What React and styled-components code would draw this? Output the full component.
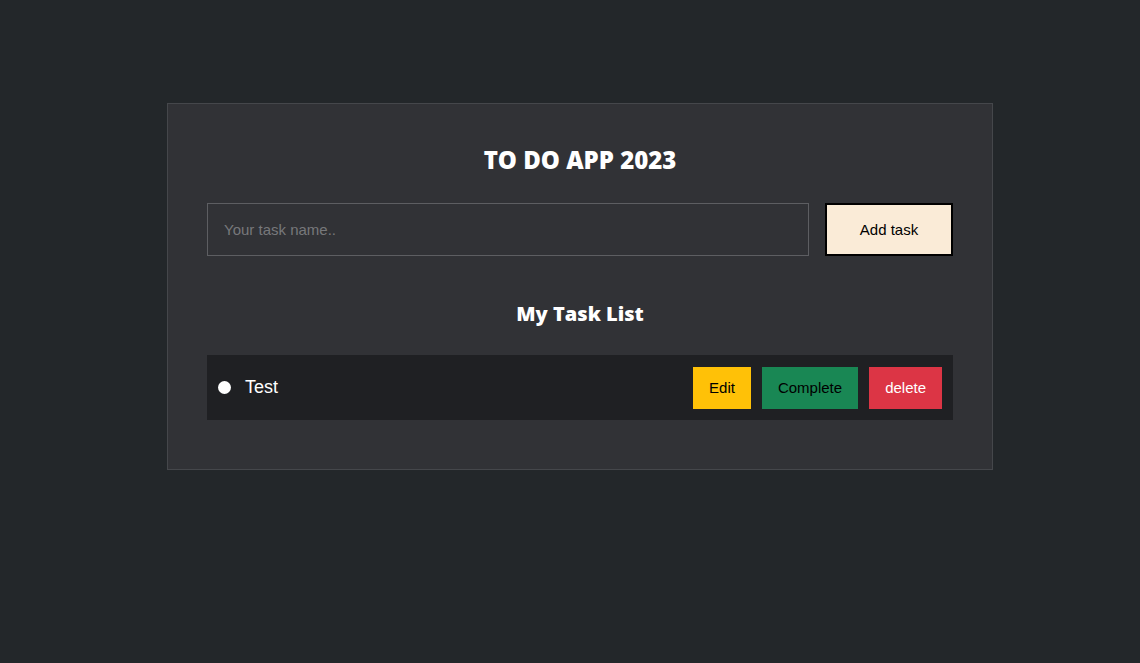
import React, { useState } from "react";
import styled, { createGlobalStyle } from "styled-components";

const GlobalStyle = createGlobalStyle`
  html, body {
    margin: 0;
    padding: 0;
    background-color: #23272a;
  }
  * {
    box-sizing: border-box;
  }
`;

const App = () => {
  const [tasks] = useState([{ id: 1, name: "Test" }]);

  return (
    <Page>
      <GlobalStyle />
      <Card>
        <Title>TO DO APP 2023</Title>
        <Form onSubmit={(e) => e.preventDefault()}>
          <TaskInput placeholder="Your task name.." />
          <AddButton type="submit">Add task</AddButton>
        </Form>
        <SubTitle>My Task List</SubTitle>
        <List>
          {tasks.map((task) => (
            <TaskRow key={task.id}>
              <Dot />
              <TaskName>{task.name}</TaskName>
              <Actions>
                <ActionButton $bg="#ffc107" $color="#000">Edit</ActionButton>
                <ActionButton $bg="#198754" $color="#000">Complete</ActionButton>
                <ActionButton $bg="#dc3545" $color="#fff">delete</ActionButton>
              </Actions>
            </TaskRow>
          ))}
        </List>
      </Card>
    </Page>
  );
};

export default App;

const Page = styled.div`
  min-height: 663px;
  display: flex;
  justify-content: center;
  align-items: flex-start;
  padding-top: 103px;
  padding-left: 20px;
`;

const Card = styled.div`
  width: 826px;
  background-color: #313236;
  border: 1px solid #45474b;
  padding: 0 39px 49px;
  display: flex;
  flex-direction: column;
`;

const Title = styled.h1`
  margin: 40px 0 0;
  font-family: "Open Sans", sans-serif;
  font-weight: 800;
  font-size: 24px;
  line-height: 32px;
  color: #fff;
  text-align: center;
`;

const Form = styled.form`
  display: flex;
  gap: 16px;
  margin-top: 27px;
`;

const TaskInput = styled.input`
  flex: 1;
  height: 53px;
  background-color: transparent;
  border: 1px solid #5d5e62;
  padding: 0 16px;
  font-family: "Liberation Sans", Arial, sans-serif;
  font-size: 15px;
  color: #fff;
  outline: none;

  &::placeholder {
    color: #77787b;
  }
`;

const AddButton = styled.button`
  width: 128px;
  height: 53px;
  background-color: #faebd7;
  border: 2px solid #000;
  font-family: "Liberation Sans", Arial, sans-serif;
  font-size: 15px;
  color: #000;
  cursor: pointer;
`;

const SubTitle = styled.h2`
  margin: 44px 0 0;
  font-family: "Open Sans", sans-serif;
  font-weight: 800;
  font-size: 20px;
  line-height: 28px;
  color: #fff;
  text-align: center;
`;

const List = styled.div`
  margin-top: 27px;
  display: flex;
  flex-direction: column;
  gap: 10px;
`;

const TaskRow = styled.div`
  display: flex;
  align-items: center;
  height: 65px;
  padding: 0 11px;
  background-color: #1f2023;
`;

const Dot = styled.span`
  width: 13px;
  height: 13px;
  border-radius: 50%;
  background-color: #fff;
  flex-shrink: 0;
`;

const TaskName = styled.span`
  margin-left: 14px;
  font-family: "Liberation Sans", Arial, sans-serif;
  font-size: 18px;
  color: #fff;
  flex: 1;
`;

const Actions = styled.div`
  display: flex;
  gap: 11px;
`;

const ActionButton = styled.button`
  height: 42px;
  padding: 0 16px;
  border: none;
  background-color: ${(p) => p.$bg};
  color: ${(p) => p.$color};
  font-family: "Liberation Sans", Arial, sans-serif;
  font-size: 15px;
  cursor: pointer;
`;
